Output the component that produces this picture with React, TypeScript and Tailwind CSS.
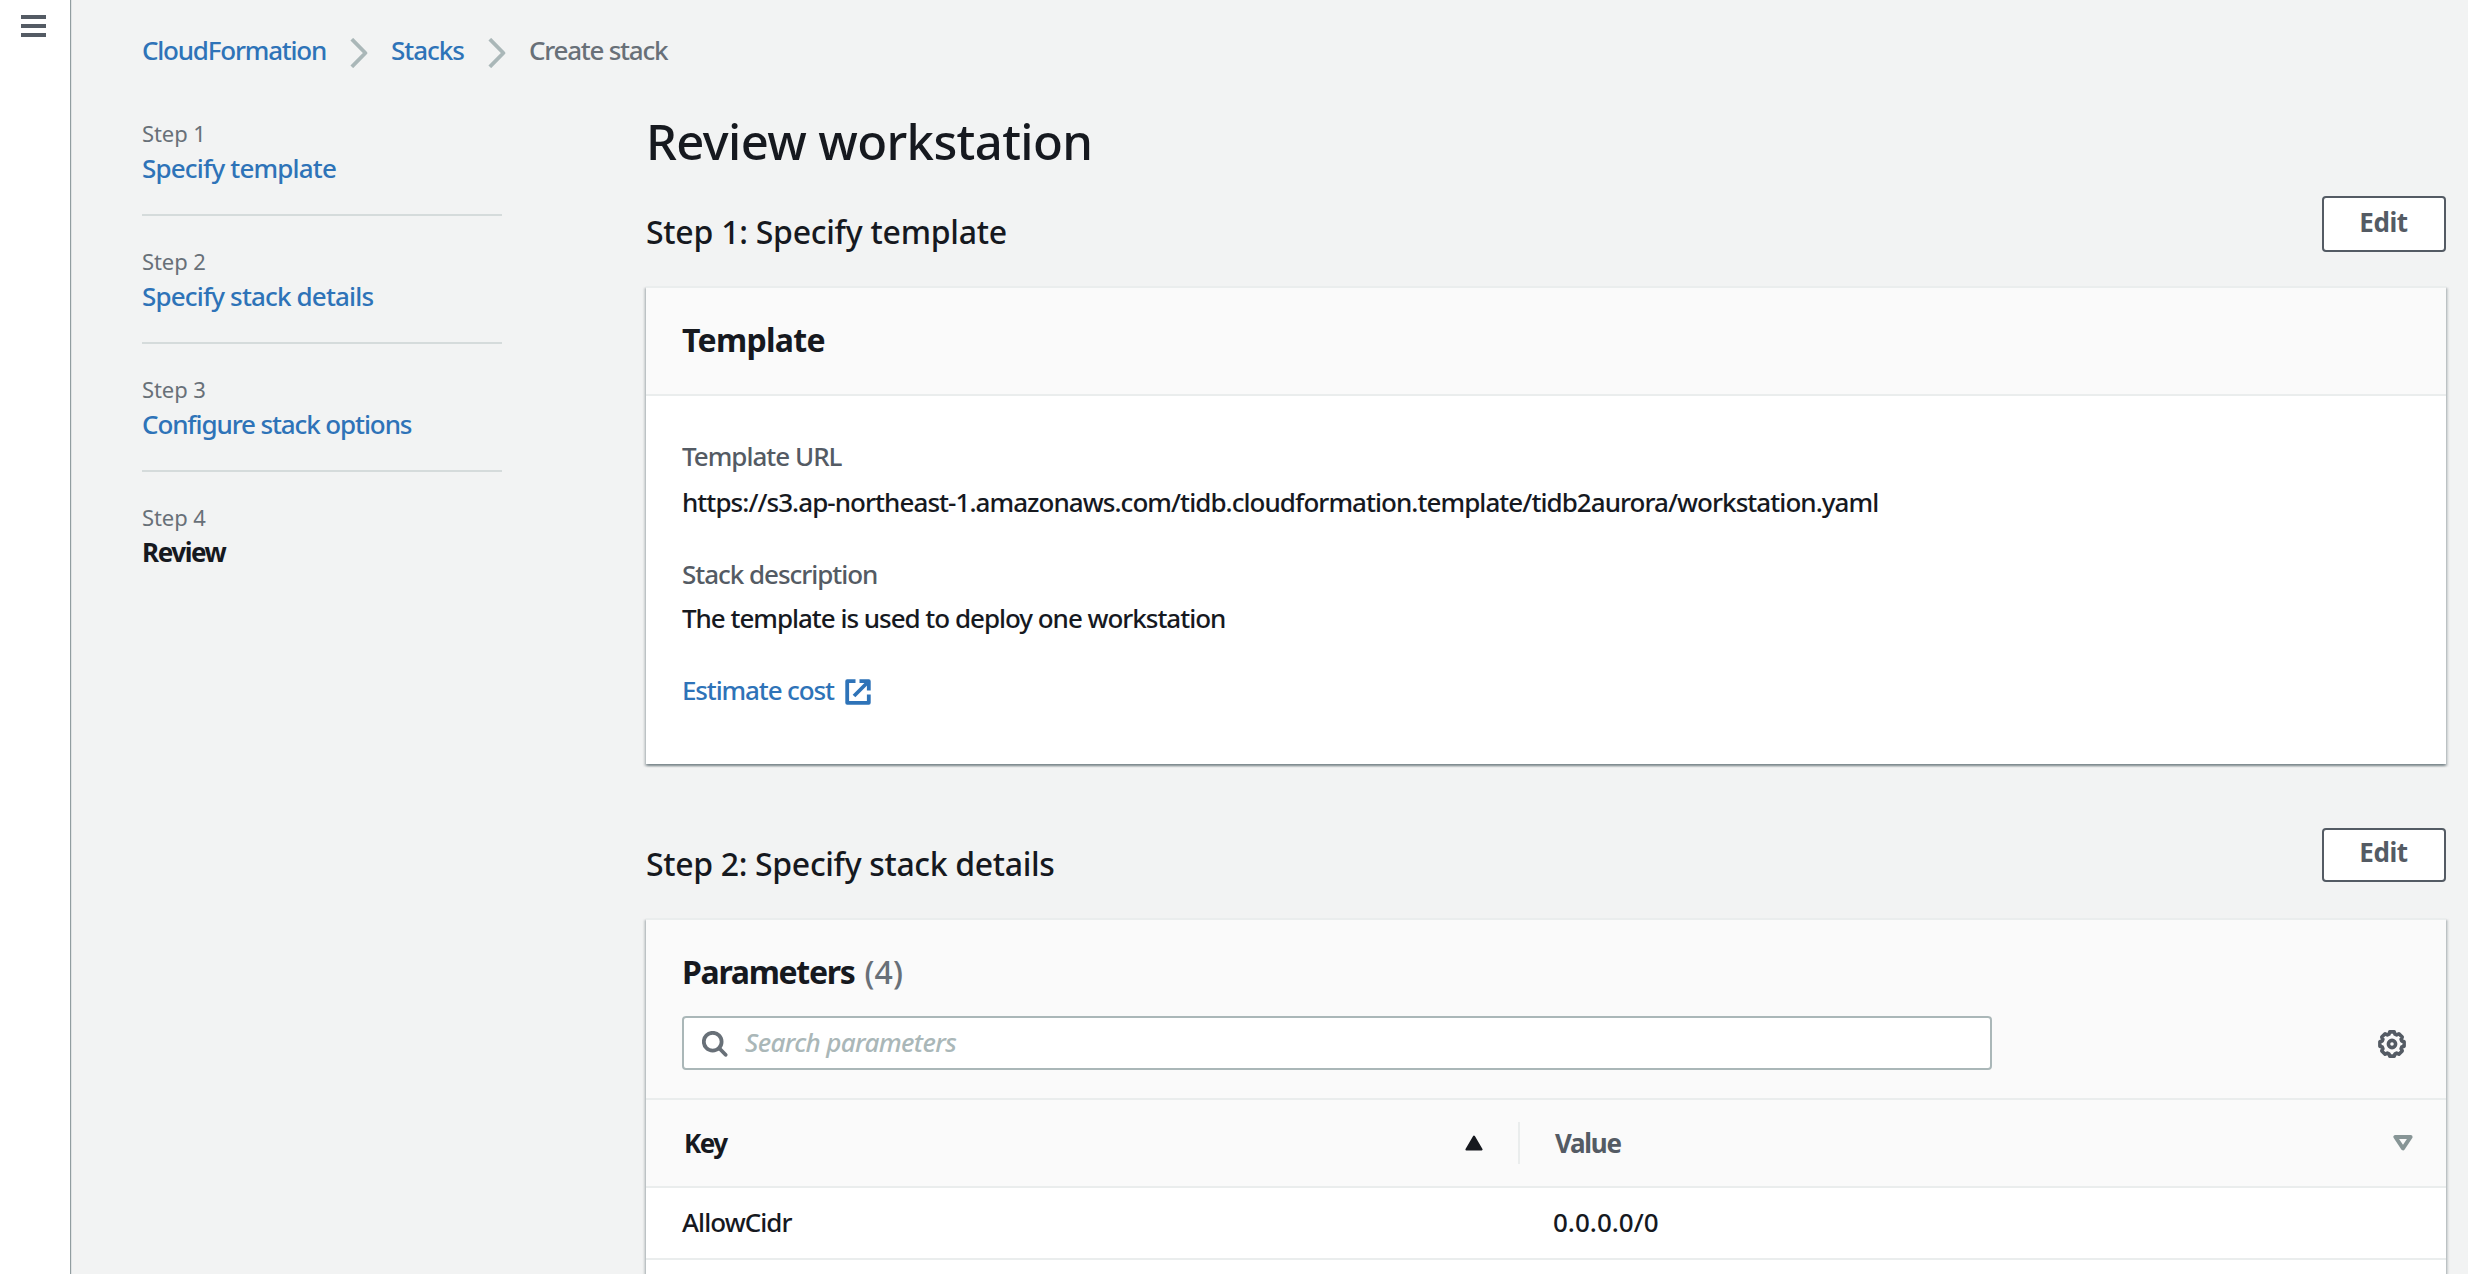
import type { ReactNode } from "react";

function Chevron() {
  return (
    <svg width="18" height="30" viewBox="0 0 18 30" fill="none" stroke="#aab7b8" strokeWidth="3.8" strokeLinejoin="round">
      <path d="M1.8 1.2 L15.4 15 L1.8 28.8" />
    </svg>
  );
}

function ExternalIcon() {
  return (
    <svg width="26" height="26" viewBox="0 0 26 26" fill="none" stroke="#2e73b8" strokeWidth="3.8" strokeLinejoin="round">
      <path d="M10.5 2.2 H2.2 V23.8 H23.8 V15.5" />
      <path d="M14.5 2.2 H23.8 V11.5" />
      <path d="M23 3 L9 17" />
    </svg>
  );
}

function SearchIcon() {
  return (
    <svg width="26" height="26" viewBox="0 0 26 26" fill="none" stroke="#687078" strokeWidth="3.8">
      <circle cx="10.7" cy="10.7" r="8.9" />
      <path d="M17 17 L23.6 23.8" strokeLinecap="round" />
    </svg>
  );
}

function GearIcon() {
  return (
    <svg width="28" height="28" viewBox="0 0 28 28" fill="none" stroke="#545b64" strokeWidth="3.6" strokeLinejoin="round">
      <path d="M11.8 1.9 H16.2 L17 4.2 L18.6 4.9 L20.9 3.8 L24.2 7.1 L23.1 9.4 L23.8 11 L26.1 11.8 V16.2 L23.8 17 L23.1 18.6 L24.2 20.9 L20.9 24.2 L18.6 23.1 L17 23.8 L16.2 26.1 H11.8 L11 23.8 L9.4 23.1 L7.1 24.2 L3.8 20.9 L4.9 18.6 L4.2 17 L1.9 16.2 V11.8 L4.2 11 L4.9 9.4 L3.8 7.1 L7.1 3.8 L9.4 4.9 L11 4.2 Z" />
      <circle cx="14" cy="14" r="3.6" strokeWidth="3.6" />
    </svg>
  );
}

const steps: { label: string; title: string; style: string }[] = [
  { label: "Step 1", title: "Specify template", style: "font-medium tracking-[-0.825px] text-[#2e73b8]" },
  { label: "Step 2", title: "Specify stack details", style: "font-medium tracking-[-0.847px] text-[#2e73b8]" },
  { label: "Step 3", title: "Configure stack options", style: "font-medium tracking-[-1.112px] text-[#2e73b8]" },
  { label: "Step 4", title: "Review", style: "font-bold tracking-[-1.416px] text-[#16191f]" },
];

function StepNav() {
  return (
    <nav className="mt-[47px] w-[360px] shrink-0">
      {steps.map((s, i) => (
        <div key={s.label} className={i < 3 ? "mb-[29px] border-b-2 border-[#d5dbdb] pb-7" : ""}>
          <div className="mb-px text-[22px] leading-[32px] font-[450] tracking-[-0.1px] text-[#687078]">{s.label}</div>
          <div className={`text-[26px] leading-[36px] ${s.style}`}>{s.title}</div>
        </div>
      ))}
    </nav>
  );
}

function Card({ children }: { children: ReactNode }) {
  return (
    <div className="border-t-2 border-[#eaeded] bg-white shadow-[0_2px_2px_0_rgba(0,28,36,0.3),2px_2px_2px_0_rgba(0,28,36,0.15),-2px_2px_2px_0_rgba(0,28,36,0.15)]">
      {children}
    </div>
  );
}

function EditButton({ className }: { className: string }) {
  return (
    <button
      className={`flex w-[124px] items-center justify-center rounded-[4px] border-2 border-[#545b64] bg-white pr-px text-[26px] leading-[36px] font-bold tracking-[-0.355px] text-[#545b64] ${className}`}
    >
      Edit
    </button>
  );
}

export default function App() {
  return (
    <div className="flex h-[1274px] w-[2468px] overflow-hidden bg-[#f2f3f3] font-['Noto_Sans',sans-serif] text-[#16191f]">
      <aside className="z-10 w-[70px] shrink-0 bg-white pt-[15px] pl-[21px] shadow-[1px_0_1px_0_rgba(0,28,36,0.4)]">
        <div className="flex w-[25px] flex-col gap-[5px]">
          <div className="h-1 bg-[#545b64]" />
          <div className="h-1 bg-[#545b64]" />
          <div className="h-1 bg-[#545b64]" />
        </div>
      </aside>

      <div className="flex-1 pt-[30px] pr-[22px] pl-[72px]">
        <div className="flex h-10 items-center text-[26px] leading-[40px] font-medium">
          <a className="w-[208px] tracking-[-1.216px] text-[#2e73b8]">CloudFormation</a>
          <div className="flex w-[41px] items-center pt-[6px]"><Chevron /></div>
          <a className="w-[97px] tracking-[-1.026px] text-[#2e73b8]">Stacks</a>
          <div className="flex w-[41px] items-center pt-[6px]"><Chevron /></div>
          <span className="tracking-[-1.25px] text-[#687078]">Create stack</span>
        </div>

        <div className="flex gap-36">
          <StepNav />
          <main className="min-w-0 flex-1 pt-[41px]">
            <h1 className="text-[49px] leading-[60px] font-medium tracking-[-0.62px]">Review workstation</h1>

            <div className="mt-[25px] flex h-14 items-end justify-between">
              <h2 className="mb-[2px] text-[32px] leading-[36px] font-medium tracking-[-0.25px]">Step 1: Specify template</h2>
              <EditButton className="h-14 pb-1" />
            </div>

            <div className="mt-[34px]">
              <Card>
                <div className="h-[108px] border-b-2 border-[#eaeded] bg-[#fafafa] px-9 pt-8">
                  <h3 className="text-[32px] leading-[40px] font-bold tracking-[-0.706px]">Template</h3>
                </div>
                <div className="px-9 pt-[42px] pb-14 text-[26px] leading-[36px] font-medium">
                  <div className="tracking-[-1px] text-[#545b64]">Template URL</div>
                  <div className="mt-[10px] whitespace-nowrap tracking-[-0.945px]">
                    https://s3.ap-northeast-1.amazonaws.com/tidb.cloudformation.template/tidb2aurora/workstation.yaml
                  </div>
                  <div className="mt-9 tracking-[-1.04px] text-[#545b64]">Stack description</div>
                  <div className="mt-2 tracking-[-1.026px]">The template is used to deploy one workstation</div>
                  <div className="mt-9 flex items-center gap-[11px] text-[#2e73b8]">
                    <span className="tracking-[-1.127px]">Estimate cost</span>
                    <span className="pt-1"><ExternalIcon /></span>
                  </div>
                </div>
              </Card>
            </div>

            <div className="mt-16 flex h-[54px] items-end justify-between">
              <h2 className="text-[32px] leading-[36px] font-medium tracking-[-0.33px]">Step 2: Specify stack details</h2>
              <EditButton className="h-[54px] pb-[6px]" />
            </div>

            <div className="mt-9">
              <Card>
                <div className="h-[180px] border-b-2 border-[#eaeded] bg-[#fafafa] px-9 pt-8">
                  <h3 className="text-[32px] leading-[40px] font-bold tracking-[-1.308px]">
                    Parameters{" "}
                    <span className="ml-[3px] font-medium tracking-[0.1px] text-[#687078]">(4)</span>
                  </h3>
                  <div className="mt-6 flex items-center justify-between pr-1">
                    <div className="flex h-[54px] w-[1310px] items-center gap-[17px] rounded-[4px] border-2 border-[#aab7b8] bg-white pl-[18px]">
                      <span className="pt-[2px]"><SearchIcon /></span>
                      <span className="pb-[3px] text-[26px] leading-[36px] font-medium tracking-[-0.64px] text-[#aab7b8] italic">Search parameters</span>
                    </div>
                    <span className="pt-[2px]"><GearIcon /></span>
                  </div>
                </div>
                <div className="flex h-[88px] items-center border-b-2 border-[#eaeded] bg-[#fafafa] text-[26px] leading-[36px] font-bold">
                  <div className="flex h-[42px] w-[874px] items-center justify-between border-r-2 border-[#eaeded] pr-[35px] pl-[38px]">
                    <span className="pb-px tracking-[-1.5px]">Key</span>
                    <svg width="18" height="16" viewBox="0 0 18 16" fill="#16191f" stroke="#16191f" strokeWidth="2" strokeLinejoin="round">
                      <path d="M9 1.5 L16.6 14.4 H1.4 Z" />
                    </svg>
                  </div>
                  <div className="flex flex-1 items-center justify-between pr-[33px] pl-[35px] text-[#545b64]">
                    <span className="pb-px tracking-[-1.3px]">Value</span>
                    <svg width="20" height="16" viewBox="0 0 20 16" fill="none" stroke="#879596" strokeWidth="4" strokeLinejoin="round">
                      <path d="M2.4 2 H17.6 L10 13.4 Z" />
                    </svg>
                  </div>
                </div>
                <div className="flex h-[72px] items-center border-b-2 border-[#eaeded] pb-[2px] text-[26px] leading-[36px] font-medium">
                  <div className="w-[874px] pl-9 tracking-[-0.95px]">AllowCidr</div>
                  <div className="pl-[33px]">0.0.0.0/0</div>
                </div>
                <div className="h-[72px]" />
              </Card>
            </div>
          </main>
        </div>
      </div>
    </div>
  );
}
